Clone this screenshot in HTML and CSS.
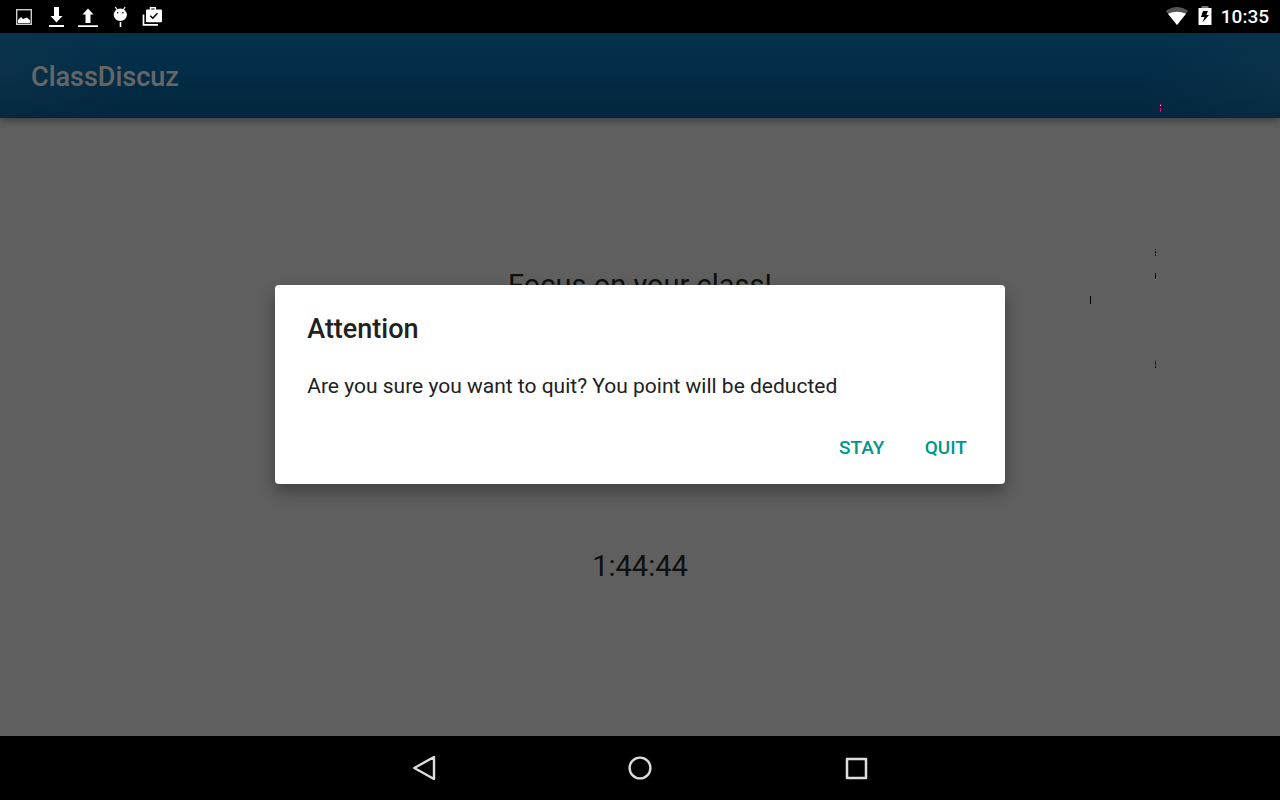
FILE: index.html
```html
<!DOCTYPE html>
<html lang="en">
<head>
<meta charset="utf-8">
<meta name="viewport" content="width=device-width, initial-scale=1">
<title>ClassDiscuz</title>
<link rel="stylesheet" href="styles.css">
</head>
<body class="screen">
  <div class="status-bar">
    <div class="notifications">
      <svg width="32" height="33" viewBox="0 0 32 33" aria-hidden="true">
        <rect x="8.700" y="9.700" width="14.600" height="14.600" fill="none" stroke="#ccc" stroke-width="1.400"/>
        <path d="M10 23V20L13 17L15 19L19 17.500L21 19.500L22 20V23Z" fill="#fff"/>
      </svg>
      <svg width="32" height="33" viewBox="0 0 32 33" aria-hidden="true">
        <path d="M14 7h5v9h3.500L16.500 22.500L10.500 16H14zM9 25h15v2H9z" fill="#fff"/>
      </svg>
      <svg width="32" height="33" viewBox="0 0 32 33" aria-hidden="true">
        <path d="M16 8.500l5.500 6H18.500V23h-5v-8.500H10.500zM6 25.300h20v1.700H6z" fill="#fff"/>
      </svg>
      <svg width="32" height="33" viewBox="0 0 32 33" aria-hidden="true">
        <path d="M11.300 7l2 3M21.200 7l-2 3" stroke="#fff" stroke-width="1.200"/>
        <ellipse cx="16.300" cy="14.800" rx="6.600" ry="6.200" fill="#fff"/>
        <path d="M15.700 22h1.600v5h-1.600z" fill="#fff"/>
        <circle cx="13.700" cy="12.700" r=".8"/><circle cx="18.900" cy="12.700" r=".8"/>
      </svg>
      <svg width="32" height="33" viewBox="0 0 32 33" aria-hidden="true">
        <path d="M7.500 14.500v10.300H22" fill="none" stroke="#fff" stroke-width="1.700"/>
        <path d="M14.500 10V7.800h4.800V10" fill="none" stroke="#fff" stroke-width="1.500"/>
        <rect x="10" y="9.600" width="16" height="12.600" rx="1" fill="#fff"/>
        <path d="M14.300 15.700l2.500 2.500 4.700-4.900" fill="none" stroke="#000" stroke-width="1.500"/>
      </svg>
    </div>
    <div class="system">
      <svg width="24" height="33" viewBox="0 0 24 33" aria-hidden="true">
        <path d="M.800 11Q12 3.200 23.200 11L12 25Z" fill="#555"/>
        <path d="M3 13.800Q12 9.800 21 13.800L12 25Z" fill="#fff"/>
      </svg>
      <svg width="14" height="33" viewBox="0 0 14 33" aria-hidden="true">
        <path d="M3.500 6h7v2h-7z" fill="#777"/>
        <path d="M.500 8h13v17H.500z" fill="#fff"/>
        <path d="M5 11h5l-1.700 4H11l-6.500 7.500L6.500 17H3z" fill="#000"/>
      </svg>
      <time class="clock">10:35</time>
    </div>
  </div>

  <div class="stage">
    <header class="app-bar"><h1 class="app-title">ClassDiscuz</h1></header>
    <main class="content">
      <p class="reading">Focus on your class!</p>
      <p class="reading">1:44:44</p>
    </main>

    <div class="scrim">
      <div class="dialog" role="alertdialog" aria-modal="true" aria-labelledby="dialog-title" aria-describedby="dialog-text">
        <h2 class="dialog-title" id="dialog-title">Attention</h2>
        <p class="dialog-text" id="dialog-text">Are you sure you want to quit? You point will be deducted</p>
        <div class="dialog-actions">
          <button class="action" type="button">STAY</button>
          <button class="action" type="button">QUIT</button>
        </div>
      </div>
    </div>

    <i class="speck speck-pink"></i>
    <i class="speck speck-cyan"></i>
    <i class="speck speck-orange"></i>
    <i class="speck speck-black"></i>
    <i class="speck speck-red"></i>
  </div>

  <nav class="nav-bar">
    <button class="nav-button" type="button" aria-label="Back">
      <svg width="32" height="32" viewBox="0 0 32 32"><path d="M6.300 16L26 5V27Z" fill="none" stroke="#ddd" stroke-width="2.400" stroke-linejoin="round"/></svg>
    </button>
    <button class="nav-button" type="button" aria-label="Home">
      <svg width="32" height="32" viewBox="0 0 32 32"><circle cx="16" cy="16" r="10.400" fill="none" stroke="#ddd" stroke-width="2.400"/></svg>
    </button>
    <button class="nav-button" type="button" aria-label="Recent apps">
      <svg width="32" height="32" viewBox="0 0 32 32"><rect x="7" y="7" width="19" height="19" fill="none" stroke="#ddd" stroke-width="2.500" stroke-linejoin="round"/></svg>
    </button>
  </nav>
</body>
</html>
```
FILE: styles.css
```css
* {
  box-sizing: border-box;
}

.screen {
  margin: 0;
  min-height: 100vh;
  display: flex;
  flex-direction: column;
  background: #000;
  font-family: Roboto, "Noto Sans", sans-serif;
}

.status-bar {
  display: flex;
  justify-content: space-between;
  padding: 0 11px 0 8px;
  color: #fff;
}

.notifications,
.system {
  display: flex;
  align-items: center;
}

.system {
  gap: 9px;
}

.clock {
  font-size: 19px;
  font-weight: 500;
  line-height: 33px;
}

.stage {
  position: relative;
  flex: 1;
  display: flex;
  flex-direction: column;
  background: #eee;
}

.app-bar {
  position: relative;
  padding: 26px 31px 23px;
  background:
    radial-gradient(ellipse 140px 80px at 0 35%, rgba(50, 140, 190, 0.4), transparent),
    radial-gradient(ellipse 140px 80px at 100% 50%, rgba(50, 140, 190, 0.4), transparent),
    linear-gradient(#087cc0, #0c5f9b);
  box-shadow: 0 3px 7px rgba(0, 0, 0, 0.35);
}

.app-title {
  margin: 0;
  color: #fff;
  font-size: 27px;
  font-weight: 500;
  line-height: 36px;
}

.content {
  flex: 1;
  display: flex;
  flex-direction: column;
  align-items: center;
  justify-content: center;
  gap: 245px;
  padding-bottom: 3px;
}

.reading {
  margin: 0;
  color: #2a2a2a;
  font-size: 29px;
  line-height: 36px;
}

.scrim {
  position: absolute;
  inset: 0;
  display: flex;
  align-items: center;
  justify-content: center;
  background: rgba(0, 0, 0, 0.6);
}

.dialog {
  width: 57%;
  padding: 24px 17px 12px 32px;
  border-radius: 4px;
  background: #fff;
  color: #212121;
  box-shadow: 0 8px 16px rgba(0, 0, 0, 0.32);
}

.dialog-title {
  margin: 0 0 25px;
  font-size: 27px;
  font-weight: 500;
  line-height: 40px;
}

.dialog-text {
  margin: 0;
  font-size: 21px;
  line-height: 25px;
}

.dialog-actions {
  display: flex;
  justify-content: flex-end;
  padding-top: 25px;
}

.action {
  min-width: 84px;
  height: 48px;
  padding: 0 16px;
  border: 0;
  background: none;
  color: #009688;
  font: 500 19px/24px Roboto, "Noto Sans", sans-serif;
}

.nav-bar {
  display: flex;
  justify-content: center;
  gap: 56px;
}

.nav-button {
  display: flex;
  align-items: center;
  justify-content: center;
  width: 160px;
  height: 64px;
  padding: 0;
  border: 0;
  background: none;
}

.speck {
  position: absolute;
  width: 1px;
  height: 8px;
}

.speck-pink {
  left: 1160px;
  top: 71px;
  background: linear-gradient(#e6007e 1px, #fff 1px 2px, #000 2px 4px, #e6007e 4px);
}

.speck-cyan {
  left: 1155px;
  top: 215px;
  background: linear-gradient(#3a8f8a 1px, #000 1px 2px, #4aa 2px 3px, #000 3px 5px, #435 5px 6px, #000 6px);
}

.speck-orange {
  left: 1155px;
  top: 239px;
  background: linear-gradient(#c40 1px, #000 1px 2px, #026 2px 3px, #000 3px 7px, #5ca98a 7px);
}

.speck-black {
  left: 1090px;
  top: 263px;
  background: #000;
}

.speck-red {
  left: 1155px;
  top: 327px;
  background: linear-gradient(#633 1px, #422 1px 2px, #722 2px 3px, #000 3px 4px, #243 4px 7px, #000 7px);
}
```
